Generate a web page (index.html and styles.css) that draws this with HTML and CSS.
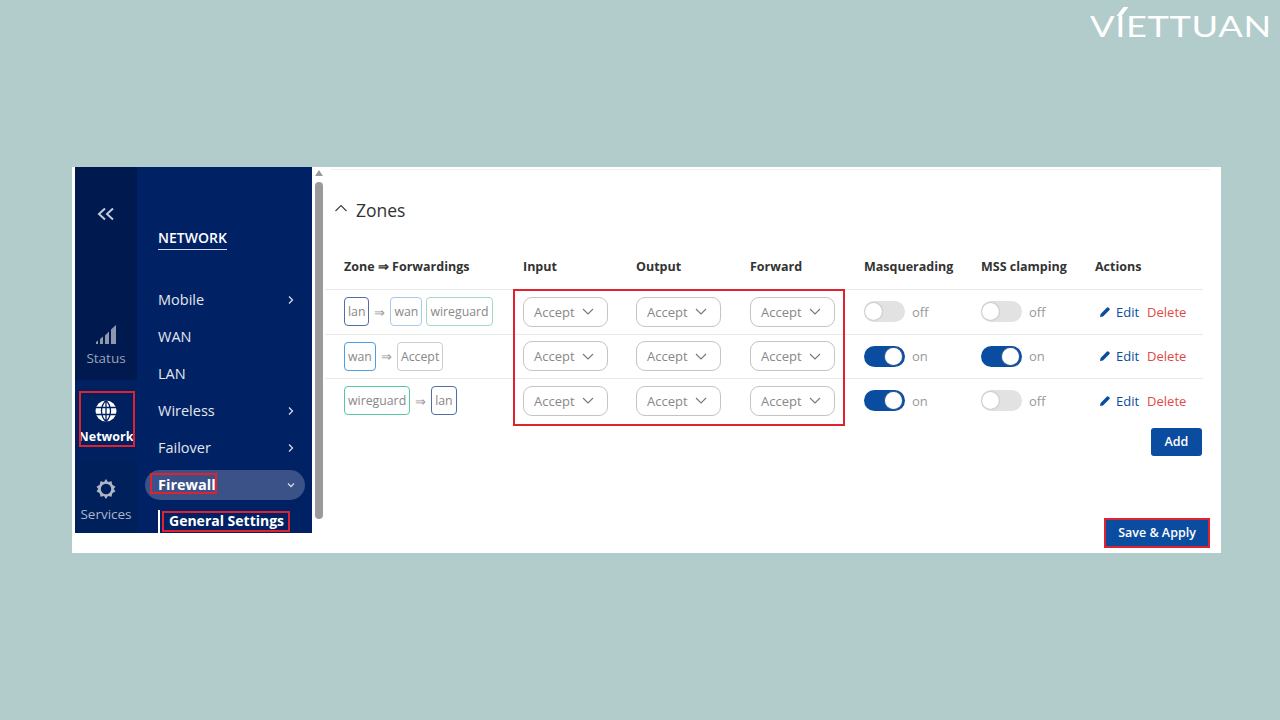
FILE: index.html
```html
<!DOCTYPE html>
<html lang="en">
<head>
<meta charset="utf-8">
<title>Firewall Zones</title>
<link rel="stylesheet" href="styles.css">
</head>
<body>
<div class="logo">VIETTUAN<i class="logo-acc"></i></div>
<div class="shot">
  <div class="panel">
    <aside class="rail">
      <div class="rail-top"><svg class="collapse" viewBox="0 0 18 14" width="18" height="14"><path d="M8 1.500 2 7l6 5.500M16 1.500 10 7l6 5.500" fill="none" stroke="#c3cbdc" stroke-width="2"/></svg></div>
      <div class="rail-item rail-status">
        <svg viewBox="0 0 20 19" width="20" height="19"><path d="M0 17l2-1.500V19H0zM4 14l3-2.500V19H4zM9 10.500l4-4V19H9zM15 4.500 20 0v19h-5z" fill="#8d97ad"/></svg>
        <span>Status</span>
      </div>
      <div class="rail-item rail-active">
        <svg viewBox="0 0 22 22" width="22" height="22"><circle cx="11" cy="11" r="10.500" fill="#fff"/><path d="M.5 7.500h21M.5 14.500h21M11 .5v21M11 .5C5 6 5 16 11 21.500M11 .5c6 5.500 6 15.500 0 21" fill="none" stroke="#00205f" stroke-width="1.300"/></svg>
        <span>Network</span>
      </div>
      <div class="rail-item rail-services">
        <svg viewBox="0 0 22 22" width="22" height="22"><path d="M11 1l2 3 3.500-.8.800 3.500 3.200 2-1.800 2.300 1.800 2.300-3.200 2-.8 3.500-3.500-.8-2 3-2-3-3.500.8-.8-3.500-3.200-2 1.800-2.300L1.500 8.700l3.200-2 .8-3.500 3.500.8z" fill="#aeb6c6"/><circle cx="11" cy="11" r="5.200" fill="#00205c"/></svg>
        <span>Services</span>
      </div>
    </aside>
    <nav class="menu">
      <div class="menu-title"><span>NETWORK</span></div>
      <ul class="menu-list">
        <li class="menu-row">Mobile<svg class="chev" viewBox="0 0 8 10" width="8" height="10"><path d="M2 1.500 5.500 5 2 8.500" fill="none" stroke="#d5dae6" stroke-width="1.300"/></svg></li>
        <li class="menu-row">WAN</li>
        <li class="menu-row">LAN</li>
        <li class="menu-row">Wireless<svg class="chev" viewBox="0 0 8 10" width="8" height="10"><path d="M2 1.500 5.500 5 2 8.500" fill="none" stroke="#d5dae6" stroke-width="1.300"/></svg></li>
        <li class="menu-row">Failover<svg class="chev" viewBox="0 0 8 10" width="8" height="10"><path d="M2 1.500 5.500 5 2 8.500" fill="none" stroke="#d5dae6" stroke-width="1.300"/></svg></li>
        <li class="menu-row menu-open"><b>Firewall</b><svg class="chev" viewBox="0 0 10 8" width="10" height="8"><path d="M2 2.500 5 5.500 8 2.500" fill="none" stroke="#d5dae6" stroke-width="1.300"/></svg></li>
      </ul>
      <div class="submenu"><b>General Settings</b></div>
    </nav>
    <div class="scroll"><i class="scroll-up"></i><i class="scroll-thumb"></i></div>
  </div>
  <main class="content">
    <div class="top-rule"></div>
    <h2 class="zones"><svg viewBox="0 0 14 8" width="14" height="8"><path d="M1.500 7 7 1.500 12.500 7" fill="none" stroke="#444" stroke-width="1.200"/></svg>Zones</h2>
    <div class="table">
      <div class="row head">
        <div>Zone ⇒ Forwardings</div><div>Input</div><div>Output</div><div>Forward</div><div>Masquerading</div><div>MSS clamping</div><div>Actions</div>
      </div>
      <div class="row">
        <div class="zone"><span class="tag t-lan">lan</span><span class="arr">⇒</span><span class="tag t-wan">wan</span><span class="tag t-wg">wireguard</span></div>
        <div><span class="sel">Accept<svg viewBox="0 0 12 7" width="12" height="7"><path d="M1 1l5 5 5-5" fill="none" stroke="#777" stroke-width="1.100"/></svg></span></div>
        <div><span class="sel">Accept<svg viewBox="0 0 12 7" width="12" height="7"><path d="M1 1l5 5 5-5" fill="none" stroke="#777" stroke-width="1.100"/></svg></span></div>
        <div><span class="sel">Accept<svg viewBox="0 0 12 7" width="12" height="7"><path d="M1 1l5 5 5-5" fill="none" stroke="#777" stroke-width="1.100"/></svg></span></div>
        <div class="tg"><i class="sw"></i>off</div>
        <div class="tg"><i class="sw"></i>off</div>
        <div class="acts"><svg viewBox="0 0 12 12" width="12" height="12"><path d="M1 11l.6-3L8 1.500a1 1 0 0 1 1.400 0l1.100 1.100a1 1 0 0 1 0 1.400L4 10.400z" fill="#0a4ca0"/></svg><a class="edit">Edit</a><a class="del">Delete</a></div>
      </div>
      <div class="row">
        <div class="zone"><span class="tag t-wan2">wan</span><span class="arr">⇒</span><span class="tag t-acc">Accept</span></div>
        <div><span class="sel">Accept<svg viewBox="0 0 12 7" width="12" height="7"><path d="M1 1l5 5 5-5" fill="none" stroke="#777" stroke-width="1.100"/></svg></span></div>
        <div><span class="sel">Accept<svg viewBox="0 0 12 7" width="12" height="7"><path d="M1 1l5 5 5-5" fill="none" stroke="#777" stroke-width="1.100"/></svg></span></div>
        <div><span class="sel">Accept<svg viewBox="0 0 12 7" width="12" height="7"><path d="M1 1l5 5 5-5" fill="none" stroke="#777" stroke-width="1.100"/></svg></span></div>
        <div class="tg"><i class="sw on"></i>on</div>
        <div class="tg"><i class="sw on"></i>on</div>
        <div class="acts"><svg viewBox="0 0 12 12" width="12" height="12"><path d="M1 11l.6-3L8 1.500a1 1 0 0 1 1.400 0l1.100 1.100a1 1 0 0 1 0 1.400L4 10.400z" fill="#0a4ca0"/></svg><a class="edit">Edit</a><a class="del">Delete</a></div>
      </div>
      <div class="row">
        <div class="zone"><span class="tag t-wg2">wireguard</span><span class="arr">⇒</span><span class="tag t-lan">lan</span></div>
        <div><span class="sel">Accept<svg viewBox="0 0 12 7" width="12" height="7"><path d="M1 1l5 5 5-5" fill="none" stroke="#777" stroke-width="1.100"/></svg></span></div>
        <div><span class="sel">Accept<svg viewBox="0 0 12 7" width="12" height="7"><path d="M1 1l5 5 5-5" fill="none" stroke="#777" stroke-width="1.100"/></svg></span></div>
        <div><span class="sel">Accept<svg viewBox="0 0 12 7" width="12" height="7"><path d="M1 1l5 5 5-5" fill="none" stroke="#777" stroke-width="1.100"/></svg></span></div>
        <div class="tg"><i class="sw on"></i>on</div>
        <div class="tg"><i class="sw"></i>off</div>
        <div class="acts"><svg viewBox="0 0 12 12" width="12" height="12"><path d="M1 11l.6-3L8 1.500a1 1 0 0 1 1.400 0l1.100 1.100a1 1 0 0 1 0 1.400L4 10.400z" fill="#0a4ca0"/></svg><a class="edit">Edit</a><a class="del">Delete</a></div>
      </div>
    </div>
    <div class="add-line"><button class="btn btn-add">Add</button></div>
    <div class="save-line"><button class="btn btn-save">Save &amp; Apply</button></div>
  </main>
  <i class="mark m-net"></i><i class="mark m-fw"></i><i class="mark m-gs"></i><i class="mark m-sel"></i>
</div>
</body>
</html>
```

FILE: styles.css
```css
* { box-sizing: border-box; }
html, body { margin: 0; height: 720px; overflow: hidden; }
body {
  background: #b2cbcb;
  padding: 167px 59px 0 72px;
  font-family: "Open Sans", "Liberation Sans", sans-serif;
  color: #404040;
  position: relative;
}
.logo {
  position: absolute;
  top: 8px;
  left: 1090px;
  font-family: "Lato", "Liberation Sans", sans-serif;
  font-weight: 400;
  font-size: 29px;
  line-height: 36px;
  letter-spacing: 0.5px;
  color: #fff;
  white-space: nowrap;
  transform: scaleX(1.25);
  transform-origin: left center;
}
.logo-acc {
  position: absolute;
  left: 24px;
  top: -1px;
  width: 4px;
  height: 9px;
  background: #fff;
  transform: skewX(-32deg);
}
.shot {
  position: relative;
  display: flex;
  width: 1149px;
  height: 386px;
  background: #fff;
}
.panel {
  display: flex;
  height: 366px;
  margin-left: 3px;
  flex: none;
}
.rail {
  width: 62px;
  background: #001a4f;
  display: flex;
  flex-direction: column;
  color: #aeb6c6;
  font-size: 13.500px;
}
.rail-top { height: 144px; padding-top: 40px; display: flex; justify-content: center; align-items: flex-start; }
.rail-item { display: flex; flex-direction: column; align-items: center; }
.rail-item span { line-height: 18px; }
.rail-status { height: 69px; padding-top: 14px; gap: 5px; color: #98a2b8; }
.rail-active { height: 81px; padding-top: 20px; gap: 6px; background: #00205f; color: #fff; font-weight: 700; font-size: 12.500px; }
.rail-services { flex: 1; padding-top: 17px; gap: 5px; background: #00205c; }
.menu { width: 175px; background: #002163; color: #e3e7ef; font-size: 14.500px; overflow: hidden; }
.menu-title { padding: 61px 0 0 21px; height: 114px; font-weight: 600; font-size: 14px; color: #fff; }
.menu-title span { display: inline-block; line-height: 20px; border-bottom: 1px solid #d9dcf0; padding-bottom: 1px; }
.menu-list { list-style: none; margin: 0; padding: 0; }
.menu-row { height: 37px; padding: 0 17px 0 21px; display: flex; align-items: center; justify-content: space-between; }
.menu-open { margin: 3.500px 7px 3.500px 8px; padding: 0 9px 0 13px; height: 30px; border-radius: 15px; background: #3a5288; color: #fff; }
.submenu { margin: 10px 0 0 21px; padding-left: 9px; border-left: 2px solid #fff; height: 30px; color: #fff; font-size: 14px; line-height: 22px; }
.scroll { width: 12px; margin-left: 1px; position: relative; display: flex; flex-direction: column; align-items: center; }
.scroll-up { width: 0; height: 0; margin-top: 3px; border: 4px solid transparent; border-top: 0; border-bottom: 6px solid #999; }
.scroll-thumb { width: 8px; height: 337px; margin-top: 6px; background: #9a9a9a; border-radius: 4px; }
.content { flex: 1; padding: 0 11px 0 6px; min-width: 0; }
.top-rule { height: 3px; border-bottom: 1px solid #eef0f0; }
.zones { margin: 29px 0 0 0; display: flex; align-items: center; gap: 8px; height: 22px; font-size: 17.500px; font-weight: 400; color: #333; }
.zones svg { margin: -5px 0 0 3px; }
.table { margin: 23px 7px 0 -6px; font-size: 13px; }
.row { display: grid; grid-template-columns: 179px 113px 114px 114px 117px 114px 107px; height: 44.500px; align-items: center; border-top: 1px solid #e9ebeb; padding-left: 19px; }
.head { height: 45px; border-top: 0; font-weight: 700; font-size: 12.500px; color: #333; }
.zone { display: flex; align-items: center; gap: 4px; }
.arr { color: #999; margin: 0 1px; }
.tag { height: 29px; line-height: 27px; padding: 0 3px; border: 1px solid #ccc; border-radius: 4px; color: #888; font-size: 12.300px; }
.t-lan { border-color: #4f6ea8; }
.t-wan { border-color: #a8c8ec; }
.t-wan2 { border-color: #4f9ee0; }
.t-wg { border-color: #a5d8c0; }
.t-wg2 { border-color: #55c8a0; }
.sel { width: 85px; height: 30px; padding: 0 13px 0 10px; display: flex; align-items: center; justify-content: space-between; border: 1px solid #c4c4c4; border-radius: 9px; color: #888; }
.tg { display: flex; align-items: center; gap: 7px; color: #999; }
.sw { display: block; position: relative; width: 41px; height: 21px; border-radius: 11px; background: #e2e2e2; }
.sw::after { content: ""; position: absolute; left: 1px; top: 2px; width: 17px; height: 17px; border-radius: 50%; background: #fff; box-shadow: 0 0 2px #999; }
.sw.on { background: #0a4ca0; }
.sw.on::after { left: 21px; }
.acts { display: flex; align-items: center; padding-left: 4px; }
.edit { color: #0a4ca0; margin-left: 5px; }
.del { color: #e04a45; margin-left: 8px; }
.add-line { display: flex; justify-content: flex-end; margin: 5px 8px 0 0; }
.btn { border: 0; background: #0a4ca0; color: #fff; font: 600 12.500px "Open Sans", "Liberation Sans", sans-serif; }
.btn-add { width: 51px; height: 28px; border-radius: 3px; }
.save-line { display: flex; justify-content: flex-end; margin: 62px 0 0 0; }
.btn-save { width: 106px; height: 30px; border: 2px solid #e0222f; }
.mark { position: absolute; border: 2px solid #e0222f; display: block; }
.m-net { left: 7px; top: 224px; width: 56px; height: 56px; }
.m-fw { left: 78px; top: 306px; width: 67px; height: 21px; }
.m-gs { left: 90px; top: 344px; width: 128px; height: 21px; }
.m-sel { left: 441px; top: 122px; width: 332px; height: 137px; }
```
